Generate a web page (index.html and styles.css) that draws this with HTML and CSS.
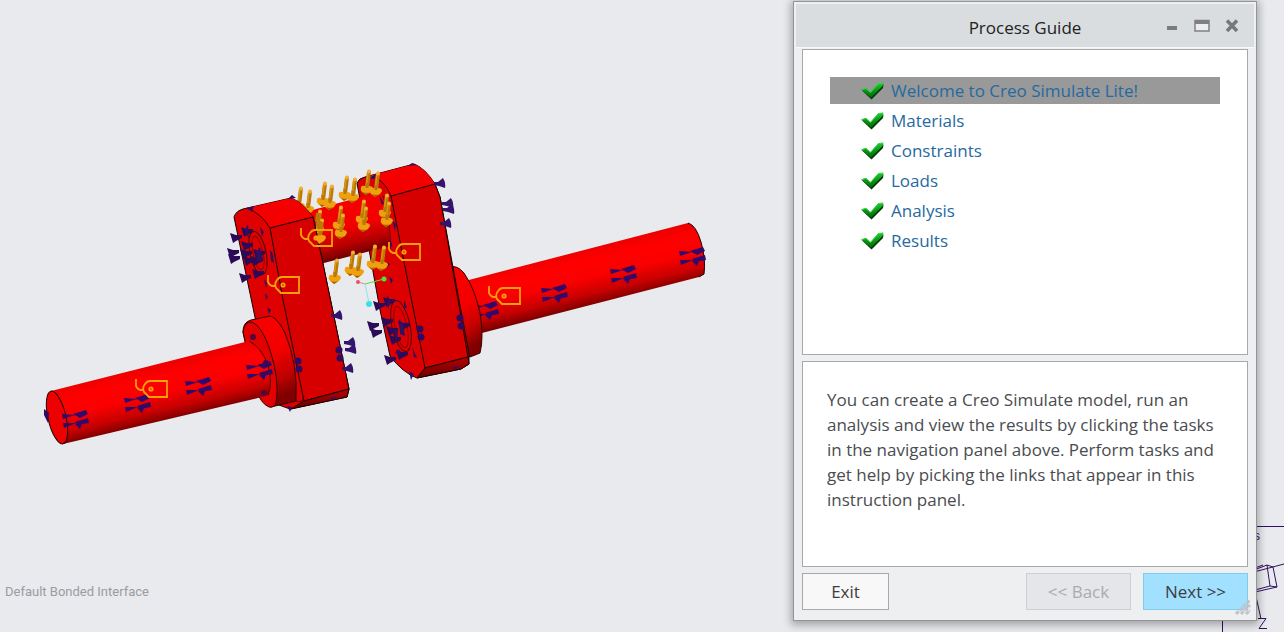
FILE: index.html
```html
<!DOCTYPE html>
<html lang="en">
<head>
<meta charset="utf-8">
<title>Process Guide</title>
<link rel="stylesheet" href="styles.css">
</head>
<body>
<main class="viewport">
  <svg class="model" width="780" height="480" viewBox="0 0 780 480" role="img" aria-label="Crankshaft model with loads and constraints">
    <defs>
      <linearGradient id="shaft" gradientUnits="userSpaceOnUse" x1="150" y1="367" x2="163" y2="422">
        <stop offset="0" stop-color="#ee0000"/><stop offset=".2" stop-color="#ff0000"/><stop offset=".5" stop-color="#fa0000"/><stop offset=".78" stop-color="#c80000"/><stop offset="1" stop-color="#780000"/>
      </linearGradient>
      <linearGradient id="shaft2" gradientUnits="userSpaceOnUse" x1="580" y1="251" x2="593" y2="306">
        <stop offset="0" stop-color="#ee0000"/><stop offset=".2" stop-color="#ff0000"/><stop offset=".5" stop-color="#fa0000"/><stop offset=".78" stop-color="#c80000"/><stop offset="1" stop-color="#780000"/>
      </linearGradient>
      <linearGradient id="pin" gradientUnits="userSpaceOnUse" x1="348" y1="198" x2="362" y2="256">
        <stop offset="0" stop-color="#f40000"/><stop offset=".45" stop-color="#f40000"/><stop offset=".75" stop-color="#b80000"/><stop offset="1" stop-color="#600000"/>
      </linearGradient>
      <linearGradient id="hub" x1="0" y1="0" x2=".25" y2="1">
        <stop offset="0" stop-color="#f80000"/><stop offset=".5" stop-color="#f40000"/><stop offset=".8" stop-color="#c00000"/><stop offset="1" stop-color="#800000"/>
      </linearGradient>
      <linearGradient id="under" x1="0" y1="0" x2="0" y2="1">
        <stop offset="0" stop-color="#b80000"/><stop offset="1" stop-color="#680000"/>
      </linearGradient>
      <g id="tag" fill="none" stroke="#ffa008" stroke-width="1.8">
        <path d="M0 0H-17Q-20 0-22 3-25 7-23 11L-18 16H0ZM-31-2V5Q-29 9-26 9H-23"/><circle cx="-16" cy="8" r="1.700"/>
      </g>
      <g id="marks" fill="#32096b">
        <path d="M0 5 1 10 13 6ZM11 5 24 1 26 5 18 9ZM1 14 2 19 14 14ZM13 13 26 9 27 14 16 16ZM13 15 21 13 18 20Z"/>
      </g>
      <path id="cone-l" fill="#2b0b57" d="M0-1 3 9 6 7 12 4V1L6 1Z"/>
      <path id="cone-r" fill="#35146d" d="M-1-2 3-2 8-6Q11-1 10 4L4 2-1 1Z"/>
      <g id="dots" fill="#2e0a60"><circle r="3.500"/><circle cx="1" cy="8" r="3.500"/></g>
      <g id="load">
        <path d="M3-23.500 1-7" stroke="#b87908" stroke-width="4"/>
        <path d="M2-23 0-7" stroke="#dd940f" stroke-width="1.500"/>
        <path d="M-5-8Q-4-10-1-9L3-9Q7-9 7-6L5-3 0 0-4-3Q-6-5-5-8Z" fill="#f0a00f"/>
        <path d="M-3-3 0 0 4-2.500 0-2Z" fill="#9b6100"/>
        <path d="M1-12 1-7" stroke="#b87908" stroke-width="3"/>
        <circle cx="3" cy="-23.500" r="2" fill="#f4ad2c"/>
      </g>
    </defs>

    <!-- right shaft and hub -->
    <path d="M465 281 688 223Q696 225 701 242 706 259 704 274L699 277 478 334Z" fill="url(#shaft2)"/>
    <path d="M688 223Q696 225 701 242 706 259 704 274L699 277" fill="none" stroke="#210000"/>
    <use href="#marks" x="472" y="300"/><use href="#marks" x="541" y="283"/><use href="#marks" x="610" y="264"/><use href="#marks" x="679" y="246"/>
    <path d="M451 267Q457 265 464 273 475 289 480 313 484 338 480 353L470 357 460 350Z" fill="url(#hub)" stroke="#300000"/>

    <!-- right web -->
    <path d="M357 183Q359 178 365 177L414 164Q425 168 435 184L440 197 469 354V364L461 369 417 378Q403 373 390 356L380 310Z" fill="#dc0000" stroke="#180000"/>
    <path d="M365 177 414 164Q425 168 435 184L391 196Q383 181 376 176Z" fill="#f40000"/>
    <path d="M391 196 435 184 440 197 468 357 425 368Z" fill="#d60000" stroke="#180000"/>
    <path d="M425 368 468 357 469 364 461 369 417 378Z" fill="url(#under)" stroke="#180000"/>
    <path d="M376 178Q386 183 391 196" fill="none" stroke="#300000"/>
    <ellipse cx="401" cy="326" rx="9" ry="26" transform="rotate(-12 401 326)" fill="none" stroke="#500000"/>
    <ellipse cx="401" cy="327" rx="6" ry="21" transform="rotate(-12 401 327)" fill="none" stroke="#8b0000"/>

    <!-- crank pin -->
    <path d="M309 211 357 198 380 193Q386 202 389 219L390 246 320 264Z" fill="url(#pin)"/>
    <path d="M383 196Q389 214 391 246" fill="none" stroke="#700000"/>

    <use href="#load" x="298" y="212"/><use href="#load" x="307" y="215"/>
    <use href="#load" x="317" y="235"/><use href="#load" x="319" y="244"/>

    <!-- left web -->
    <path d="M234 217Q236 211 243 209L291 198Q302 202 313 217L322 259 349 389 347 397 290 409 279 405 256 322Z" fill="#df0000" stroke="#180000"/>
    <path d="M247 208 291 198Q302 202 313 217L270 228Q262 214 247 208Z" fill="#f40000"/>
    <path d="M270 228 313 217 322 259 349 389 304 401 283 300Z" fill="#d60000" stroke="#180000"/>
    <path d="M304 401 349 389 347 397 291 409Z" fill="url(#under)" stroke="#180000"/>
    <path d="M247 208Q262 214 270 228" fill="none" stroke="#300000"/>
    <ellipse cx="258" cy="253" rx="8" ry="22" transform="rotate(-12 258 253)" fill="none" stroke="#500000"/>
    <ellipse cx="258" cy="253" rx="5" ry="17" transform="rotate(-12 258 253)" fill="none" stroke="#8b0000"/>

    <!-- left hub -->
    <path d="M243 332Q243 322 251 320L270 316Q277 317 285 333 298 364 296 401L271 407Q260 402 254 382Z" fill="url(#hub)" stroke="#300000"/>
    <path d="M243 332Q244 321 252 322 262 326 270 350 280 381 276 403 274 408 269 407 261 404 255 388Z" fill="#e30000" stroke="#300000"/>
    <path d="M296 401Q302 404 304 396" fill="none" stroke="#500000"/>

    <!-- left shaft -->
    <path d="M51 391 249 341Q261 347 268 365 273 384 268 395L258 398 63 444Z" fill="url(#shaft)"/>
    <path d="M249 341Q261 347 268 365 273 384 268 395" fill="none" stroke="#500000"/>
    <ellipse cx="57" cy="417.500" rx="9" ry="27" transform="rotate(-13 57 417.500)" fill="#ec0000" stroke="#240000"/>
    <use href="#marks" x="62" y="409"/><use href="#marks" x="124" y="393"/><use href="#marks" x="185" y="376"/><use href="#marks" x="246" y="360"/>
    <path d="M44 409 49 413 48 423 44 415Z" fill="#2e0a60"/>

    <!-- constraint symbols -->
    <g>
      <use href="#cone-l" x="230" y="234"/><use href="#cone-l" x="227" y="249"/><use href="#cone-l" x="228" y="255"/><use href="#cone-l" x="239" y="274"/>
      <use href="#cone-l" x="241" y="242"/><use href="#cone-l" x="243" y="257"/><use href="#cone-l" x="253" y="250"/><use href="#cone-l" x="252" y="270"/><use href="#cone-l" x="241" y="228"/>
      <use href="#cone-l" x="240" y="250"/><use href="#cone-l" x="251" y="257"/>
      <use href="#cone-l" x="373" y="302"/><use href="#cone-l" x="367" y="322"/><use href="#cone-l" x="370" y="329"/><use href="#cone-l" x="384" y="356"/>
      <use href="#cone-l" x="383" y="298"/><use href="#cone-l" x="381" y="318"/><use href="#cone-l" x="386" y="327"/><use href="#cone-l" x="398" y="322"/><use href="#cone-l" x="396" y="351"/><use href="#cone-l" x="389" y="336"/>
      <use href="#cone-r" x="435" y="184"/><use href="#cone-r" x="443" y="204"/><use href="#cone-r" x="444" y="210"/><use href="#cone-r" x="441" y="224"/>
      <use href="#cone-r" x="332" y="316"/><use href="#cone-r" x="345" y="343"/><use href="#cone-r" x="346" y="350"/><use href="#cone-r" x="343" y="369"/>
      <use href="#dots" x="298" y="361"/><use href="#dots" x="420" y="329"/><use href="#dots" x="460" y="318"/><use href="#dots" x="339" y="350"/>
      <path fill="#30105f" d="M247 208 254 206 252 212ZM288 199 292 195 296 198ZM369 178 376 174 375 179ZM408 166 412 163 417 165ZM245 230 248 224 249 240ZM256 252 260 247 263 260 257 262ZM260 227 264 232 262 237ZM270 250 273 254 274 263 271 261ZM264 279 267 283 266 288ZM265 293 268 297 266 300ZM267 307 271 310 269 314ZM379 195 384 203 382 205ZM392 220 396 224 395 231ZM389 239 392 244 390 251ZM386 262 390 264 387 267ZM389 276 393 280 391 284ZM387 295 391 302 388 309ZM399 319 403 324 405 336 400 334ZM404 300 407 308 404 308ZM412 347 417 358 414 357ZM409 371 414 374 411 380ZM287 406 292 407 290 412ZM330 398 336 397 332 401ZM453 367 459 366 455 370ZM393 331 398 329 397 342ZM395 353 399 349 401 355Z"/>
      <circle cx="253" cy="337" r="3" fill="#51063d"/><circle cx="264" cy="393" r="3" fill="#51063d"/><circle cx="266" cy="363" r="3" fill="#390951"/>
    </g>

    <!-- load arrows -->
    <use href="#load" x="322" y="207"/><use href="#load" x="329" y="210"/><use href="#load" x="344" y="201"/><use href="#load" x="352" y="203"/>
    <use href="#load" x="366" y="195"/><use href="#load" x="375" y="197"/>
    <path d="M318 213 317 222M320 221 319 232" stroke="#b87908" stroke-width="4"/>
    <path d="M314 236 322 235 324 240 319 244Z" fill="#f0a00f"/>
    <use href="#load" x="338" y="231"/><use href="#load" x="340" y="239"/><use href="#load" x="361" y="225"/><use href="#load" x="363" y="232"/>
    <use href="#load" x="384" y="219"/><use href="#load" x="386" y="227"/><use href="#load" x="334" y="284"/><use href="#load" x="350" y="276"/>
    <use href="#load" x="357" y="278"/><use href="#load" x="372" y="270"/><use href="#load" x="381" y="271"/>

    <!-- interface tags -->
    <use href="#tag" x="167" y="381"/><use href="#tag" x="332" y="230"/><use href="#tag" x="299" y="277"/><use href="#tag" x="420" y="244"/><use href="#tag" x="520" y="288"/>

    <!-- origin triad -->
    <path d="M358 282 365 284" stroke="#e88"/><path d="M365 284 384 279" stroke="#4be04b"/><path d="M365 284 369 303" stroke="#8ee6e6"/>
    <circle cx="358" cy="282" r="2" fill="#f05060"/><circle cx="384" cy="279" r="2.500" fill="#55dd3c"/><circle cx="369" cy="304" r="3" fill="#37e3e6"/>
  </svg>

  <p class="interface-label">Default Bonded Interface</p>

  <svg class="axes" width="64" height="112" viewBox="0 0 64 112" aria-hidden="true">
    <g fill="none" stroke="#32105f">
      <path d="M0 6.500H64M2.500 112V90M34 52 64 44M34 50 47 45 53 47 57 67 35 72M47 45 50 66M50 66 57 67M50 66 35 70M35 48 43 45M35 72 41 99"/>
      <path d="M38 98.500H46L39 108.500H47"/>
    </g>
    <text x="34" y="20" class="axis-text">s</text>
  </svg>

  <section class="dialog" role="dialog" aria-labelledby="dialog-title">
    <header class="titlebar">
      <h1 id="dialog-title" class="title">Process Guide</h1>
      <div class="window-controls">
        <button type="button" class="control" aria-label="Minimize"><svg width="16" height="16" viewBox="0 0 16 16"><path d="M3 8H13V12H3Z" fill="#7c7c80"/></svg></button>
        <button type="button" class="control" aria-label="Maximize"><svg width="16" height="16" viewBox="0 0 16 16"><path d="M1 2.500H15V13H1Z" fill="#eceded" stroke="#808084" stroke-width="1.500"/><path d="M1 2H15V6H1Z" fill="#808084"/></svg></button>
        <button type="button" class="control" aria-label="Close"><svg width="16" height="16" viewBox="0 0 16 16"><path d="M3 2.500 13 13M13 2.500 3 13" stroke="#78787c" stroke-width="3.500"/></svg></button>
      </div>
    </header>
    <div class="content">
      <nav class="panel tasks" aria-label="Tasks">
        <svg class="symbols" aria-hidden="true">
          <linearGradient id="green" x1="0" y1="0" x2="0" y2="1"><stop offset="0" stop-color="#20cf35"/><stop offset=".5" stop-color="#0b9a16"/><stop offset="1" stop-color="#006b08"/></linearGradient>
          <symbol id="check" viewBox="0 0 23 18">
            <path d="M1 8.500 5 8 9.500 11.500 18 2.500H22.500L22 6 10.500 17.500Z" fill="#073b0a"/>
            <path d="M0 7.500 5 6 9.500 10 17.500 1 22.500 .5 21.500 4 10 15.500Z" fill="url(#green)"/>
            <path d="M1 7.500 5 6.500 9.500 10.500 17.500 1.500H21.500" fill="none" stroke="#35dd48"/>
          </symbol>
        </svg>
        <ul class="task-list">
          <li class="task current"><svg class="check"><use href="#check"/></svg><a href="#welcome" aria-current="step">Welcome to Creo Simulate Lite!</a></li>
          <li class="task"><svg class="check"><use href="#check"/></svg><a href="#materials">Materials</a></li>
          <li class="task"><svg class="check"><use href="#check"/></svg><a href="#constraints">Constraints</a></li>
          <li class="task"><svg class="check"><use href="#check"/></svg><a href="#loads">Loads</a></li>
          <li class="task"><svg class="check"><use href="#check"/></svg><a href="#analysis">Analysis</a></li>
          <li class="task"><svg class="check"><use href="#check"/></svg><a href="#results">Results</a></li>
        </ul>
      </nav>
      <div class="panel instructions">
        <p>You can create a Creo Simulate model, run an analysis and view the results by clicking the tasks in the navigation panel above. Perform tasks and get help by picking the links that appear in this instruction panel.</p>
      </div>
      <footer class="actions">
        <button type="button" class="button exit">Exit</button>
        <button type="button" class="button" disabled>&lt;&lt; Back</button>
        <button type="button" class="button primary">Next &gt;&gt;</button>
      </footer>
    </div>
    <svg class="grip" width="18" height="18" viewBox="0 0 18 18" aria-hidden="true"><path d="M2 16 16 2M7 16 16 7M12 16 16 12" stroke="#c0c3c8" stroke-width="3" stroke-dasharray="4 1"/></svg>
  </section>
</main>
</body>
</html>
```
FILE: styles.css
```css
* { box-sizing: border-box; }

body {
  margin: 0;
  font-family: "Open Sans", "Segoe UI", sans-serif;
  font-size: 17px;
  color: #4a4c4f;
}

.viewport {
  position: relative;
  min-height: 100vh;
  overflow: hidden;
  background: #e8eaee;
}

.model { position: absolute; left: 0; top: 0; }

.interface-label {
  position: absolute;
  left: 5px;
  bottom: 32px;
  margin: 0;
  font: 13px/16px Roboto, Arial, sans-serif;
  color: #999ca1;
}

.axes { position: absolute; right: 0; bottom: 0; }
.axis-text { font: 12px "Liberation Sans", sans-serif; fill: #32105f; }

.dialog {
  position: absolute;
  right: 27px;
  top: 1px;
  width: 464px;
  padding: 2px;
  border: 1px solid #929496;
  background: #eeeff1;
  box-shadow: 0 2px 8px 2px rgba(0, 0, 0, .3);
}

.titlebar {
  position: relative;
  display: flex;
  align-items: center;
  justify-content: center;
  height: 43px;
  padding-top: 4px;
  background: #dadddf;
}

.title {
  margin: 0;
  font-size: 17px;
  line-height: 24px;
  font-weight: 400;
  color: #222;
}

.window-controls {
  position: absolute;
  right: 14px;
  top: 14px;
  display: flex;
  gap: 14px;
}

.control {
  display: flex;
  padding: 0;
  border: 0;
  background: none;
}

.content {
  display: flex;
  flex-direction: column;
  gap: 6px;
  padding: 1px 6px 8px;
  border-top: 1px solid #f8f8f9;
}

.panel {
  border: 1px solid #a8a9ab;
  background: #fff;
}

.tasks { min-height: 306px; padding: 27px; }
.symbols { position: absolute; width: 0; height: 0; }

.task-list {
  display: flex;
  flex-direction: column;
  gap: 3px;
  margin: 0;
  padding: 0;
  list-style: none;
}

.task {
  display: flex;
  align-items: center;
  gap: 7px;
  height: 27px;
  padding-left: 31px;
}

.task.current { background: #999; }
.task a { color: #256a9f; line-height: 26px; text-decoration: none; }
.check { width: 23px; height: 18px; }

.instructions { min-height: 206px; padding: 25px 24px; }
.instructions p { margin: 0; line-height: 25px; }

.actions { display: flex; gap: 12px; }

.button {
  width: 105px;
  height: 37px;
  padding: 0;
  border: 1px solid #7fcdec;
  background: #f8f8f9;
  font: inherit;
  color: #3c3e41;
}

.button.exit { width: 87px; margin-right: auto; border-color: #a8a9ab; }
.button:disabled { border-color: #cdcfd2; background: #e5e6e9; color: #a9abae; }
.button.primary { background: #a1e1ff; }

.grip { position: absolute; right: 4px; bottom: 4px; }
```
